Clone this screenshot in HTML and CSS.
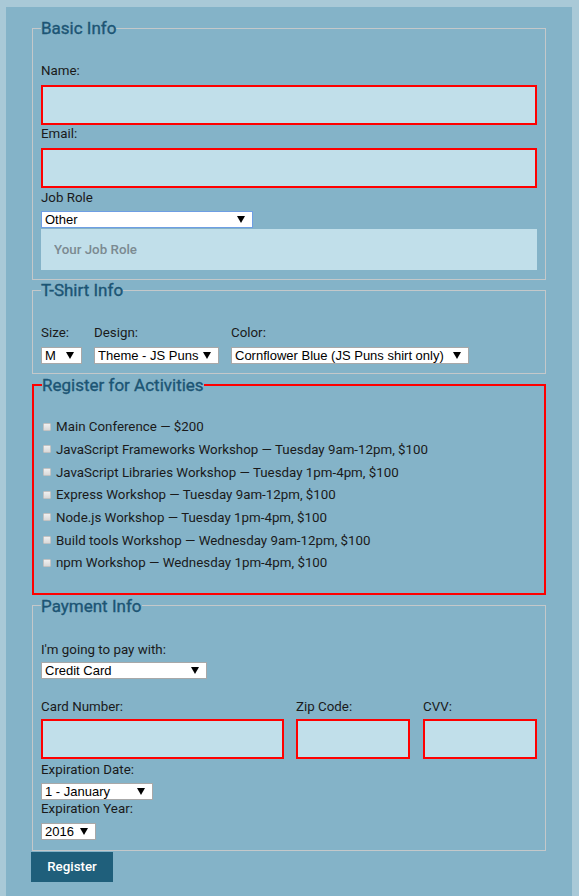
FILE: index.html
```html
<!DOCTYPE html>
<html lang="en">
<head>
<meta charset="utf-8">
<title>Conference Registration</title>
<link rel="stylesheet" href="styles.css">
</head>
<body>
<div class="container">
  <form class="form">
    <fieldset class="fs fs-basic">
      <legend>Basic Info</legend>
      <label class="lbl lbl-name" for="name">Name:</label>
      <input class="txt err" type="text" id="name">
      <label class="lbl lbl-email" for="mail">Email:</label>
      <input class="txt err" type="email" id="mail">
      <label class="lbl lbl-job" for="title">Job Role</label>
      <span class="sel-wrap job-wrap">
        <select class="sel sel-job focus" id="title">
          <option>Other</option>
        </select>
      </span>
      <input class="txt plain" type="text" placeholder="Your Job Role">
    </fieldset>

    <fieldset class="fs fs-shirt">
      <legend>T-Shirt Info</legend>
      <div class="shirt-row">
        <div class="col">
          <label class="lbl">Size:</label>
          <span class="sel-wrap"><select class="sel sel-size"><option>M</option></select></span>
        </div>
        <div class="col">
          <label class="lbl">Design:</label>
          <span class="sel-wrap"><select class="sel sel-design"><option>Theme - JS Puns</option></select></span>
        </div>
        <div class="col">
          <label class="lbl">Color:</label>
          <span class="sel-wrap"><select class="sel sel-color"><option>Cornflower Blue (JS Puns shirt only)</option></select></span>
        </div>
      </div>
    </fieldset>

    <fieldset class="fs fs-act">
      <legend>Register for Activities</legend>
      <label class="act"><input type="checkbox" class="cb"><span>Main Conference — $200</span></label>
      <label class="act"><input type="checkbox" class="cb"><span>JavaScript Frameworks Workshop — Tuesday 9am-12pm, $100</span></label>
      <label class="act"><input type="checkbox" class="cb"><span>JavaScript Libraries Workshop — Tuesday 1pm-4pm, $100</span></label>
      <label class="act"><input type="checkbox" class="cb"><span>Express Workshop — Tuesday 9am-12pm, $100</span></label>
      <label class="act"><input type="checkbox" class="cb"><span>Node.js Workshop — Tuesday 1pm-4pm, $100</span></label>
      <label class="act"><input type="checkbox" class="cb"><span>Build tools Workshop — Wednesday 9am-12pm, $100</span></label>
      <label class="act"><input type="checkbox" class="cb"><span>npm Workshop — Wednesday 1pm-4pm, $100</span></label>
    </fieldset>

    <fieldset class="fs fs-pay">
      <legend>Payment Info</legend>
      <label class="lbl lbl-pay">I'm going to pay with:</label>
      <span class="sel-wrap"><select class="sel sel-pay"><option>Credit Card</option></select></span>
      <div class="card-row">
        <div class="col">
          <label class="lbl">Card Number:</label>
          <input class="txt err" type="text">
        </div>
        <div class="col">
          <label class="lbl">Zip Code:</label>
          <input class="txt err" type="text">
        </div>
        <div class="col col-cvv">
          <label class="lbl">CVV:</label>
          <input class="txt err" type="text">
        </div>
      </div>
      <label class="lbl lbl-exp">Expiration Date:</label>
      <span class="sel-wrap"><select class="sel sel-month"><option>1 - January</option></select></span>
      <label class="lbl lbl-year">Expiration Year:</label>
      <span class="sel-wrap"><select class="sel sel-year"><option>2016</option></select></span>
    </fieldset>

    <button type="submit" class="btn">Register</button>
  </form>
</div>
</body>
</html>
```

FILE: styles.css
```css
html, body {
  margin: 0;
  padding: 0;
}

body {
  background: #a9c9d7;
  font-family: Roboto, "Liberation Sans", Arial, sans-serif;
  font-size: 13.333px;
  color: #1a1a1a;
}

.container {
  box-sizing: border-box;
  width: 566px;
  min-height: 889px;
  margin: 7px 0 0 6px;
  padding: 11px 26px 16px;
  background: #84b3c8;
}

.form {
  display: flex;
  flex-direction: column;
  align-items: stretch;
}

.fs {
  margin: 0 0 1px;
  padding: 0 8px 9px;
  border: 1px solid #c4c8ca;
  min-width: 0;
}

.fs legend {
  padding: 0;
  margin-left: 0;
  font-size: 17px;
  line-height: 20px;
  color: #1c5574;
  -webkit-text-stroke: 0.35px #1c5574;
}

.fs-basic { margin-bottom: 0; }

.lbl {
  display: block;
  line-height: 17px;
  margin: 0 0 6px;
}

.lbl-name { margin-top: 24px; }
.lbl-email { margin-top: 0; }
.lbl-job { margin-top: 1px; margin-bottom: 5px; }

.txt {
  display: block;
  box-sizing: border-box;
  width: 100%;
  height: 40px;
  margin: 0;
  padding: 0 13px;
  background: #c1dfea;
  font-family: Roboto, "Liberation Sans", sans-serif;
  font-size: 13.333px;
  outline: none;
}

.txt.err {
  border: 2px solid #ff0000;
}

.txt.plain {
  border: 0;
  height: 41px;
  margin-top: 1px;
}

.txt.plain::placeholder {
  color: #7b8a91;
  font-weight: 500;
}

.sel-wrap {
  position: relative;
  display: block;
  width: fit-content;
}

.sel-wrap::after {
  content: "";
  position: absolute;
  right: 8px;
  top: 5px;
  width: 0;
  height: 0;
  border-left: 4px solid transparent;
  border-right: 4px solid transparent;
  border-top: 7px solid #000;
  pointer-events: none;
}

.sel {
  -webkit-appearance: none;
  appearance: none;
  display: block;
  box-sizing: border-box;
  height: 17px;
  margin: 0;
  padding: 0 3px;
  border: 1px solid #a8a8a8;
  border-radius: 0;
  background: #fff;
  color: #000;
  font-family: "Liberation Sans", Arial, sans-serif;
  font-size: 13px;
  line-height: 15px;
  outline: none;
}

.sel.focus {
  border-color: #6e9ee4;
}

.sel-job { width: 212px; }
.sel-size { width: 41px; }
.sel-design { width: 125px; }
.sel-color { width: 238px; }
.sel-pay { width: 166px; }
.sel-month { width: 112px; }
.sel-year { width: 55px; }

.fs-shirt { padding-bottom: 9px; }

.shirt-row {
  display: flex;
  gap: 12px;
  margin-top: 24px;
}

.col {
  display: flex;
  flex-direction: column;
}

.fs-act {
  border: 2px solid #ff0000;
  padding: 21px 7px 18px;
}

.fs-act legend {
  margin-left: 1px;
}

.act {
  display: flex;
  align-items: center;
  height: 22.67px;
  line-height: 16px;
}

.cb {
  -webkit-appearance: none;
  appearance: none;
  box-sizing: border-box;
  width: 8px;
  height: 8px;
  margin: -1px 5px 0 2px;
  border: 1px solid #c2c2c2;
  background: linear-gradient(#f0f0f0, #d9d9d9);
  border-radius: 1px;
}

.fs-pay { padding-bottom: 10px; }

.lbl-pay { margin-top: 25px; margin-bottom: 4px; }

.card-row {
  display: grid;
  grid-template-columns: 243px 114px 1fr;
  column-gap: 12px;
  margin-top: 19px;
}

.col-cvv { padding-left: 1px; }

.card-row .lbl { margin-bottom: 4px; }

.lbl-exp { margin-top: 2px; margin-bottom: 5px; }
.lbl-year { margin-top: 0; margin-bottom: 6px; }

.btn {
  align-self: flex-start;
  width: 82px;
  height: 30px;
  margin: 0 0 0 -1px;
  padding: 0;
  border: 0;
  background: #1f5f7b;
  color: #fff;
  font-family: Roboto, "Liberation Sans", sans-serif;
  font-size: 13.333px;
  font-weight: 500;
  cursor: pointer;
}
```
